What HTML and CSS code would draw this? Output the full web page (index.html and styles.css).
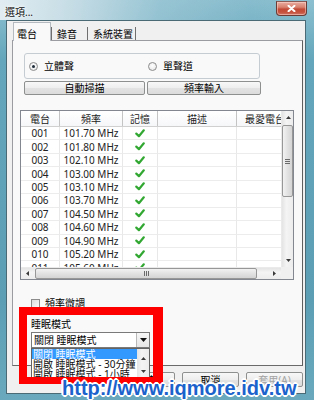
FILE: index.html
```html
<!DOCTYPE html>
<html>
<head>
<meta charset="utf-8">
<link rel="stylesheet" href="styles.css">
</head>
<body>
<div class="window">
  <div class="titlebar">
    <span class="title">選項...</span>
    <span class="close"><svg width="9" height="7" viewBox="0 0 9 7"><path d="M1.5 0.8 L7.5 6.2 M7.5 0.8 L1.5 6.2" stroke="#fff" stroke-width="2" stroke-linecap="round"/></svg></span>
  </div>
  <div class="client">
    <div class="tabs">
      <div class="tab sel">電台</div>
      <div class="tab t2">錄音</div>
      <div class="tab t3">系統裝置</div>
    </div>
    <div class="panel">
      <div class="group">
        <div class="radio r1"><span class="rb on"></span>立體聲</div>
        <div class="radio"><span class="rb"></span>單聲道</div>
      </div>
      <div class="btnrow">
        <div class="btn b1">自動掃描</div>
        <div class="btn b2">頻率輸入</div>
      </div>
      <div class="lv">
        <div class="lv-main">
          <div class="lv-head">
            <div class="cell c1">電台</div><div class="cell c2">頻率</div><div class="cell c3">記憶</div><div class="cell c4">描述</div><div class="cell c5">最愛電台</div>
          </div>
          <div class="row"><div class="cell c1">001</div><div class="cell c2">101.70 MHz</div><div class="cell c3"><svg class="ok" viewBox="0 0 10 9"><path d="M1.3 4.6 L3.9 7.2 L8.8 1.3"/></svg></div><div class="cell c4"></div><div class="cell c5"></div></div>
          <div class="row"><div class="cell c1">002</div><div class="cell c2">101.80 MHz</div><div class="cell c3"><svg class="ok" viewBox="0 0 10 9"><path d="M1.3 4.6 L3.9 7.2 L8.8 1.3"/></svg></div><div class="cell c4"></div><div class="cell c5"></div></div>
          <div class="row"><div class="cell c1">003</div><div class="cell c2">102.10 MHz</div><div class="cell c3"><svg class="ok" viewBox="0 0 10 9"><path d="M1.3 4.6 L3.9 7.2 L8.8 1.3"/></svg></div><div class="cell c4"></div><div class="cell c5"></div></div>
          <div class="row"><div class="cell c1">004</div><div class="cell c2">103.00 MHz</div><div class="cell c3"><svg class="ok" viewBox="0 0 10 9"><path d="M1.3 4.6 L3.9 7.2 L8.8 1.3"/></svg></div><div class="cell c4"></div><div class="cell c5"></div></div>
          <div class="row"><div class="cell c1">005</div><div class="cell c2">103.10 MHz</div><div class="cell c3"><svg class="ok" viewBox="0 0 10 9"><path d="M1.3 4.6 L3.9 7.2 L8.8 1.3"/></svg></div><div class="cell c4"></div><div class="cell c5"></div></div>
          <div class="row"><div class="cell c1">006</div><div class="cell c2">103.70 MHz</div><div class="cell c3"><svg class="ok" viewBox="0 0 10 9"><path d="M1.3 4.6 L3.9 7.2 L8.8 1.3"/></svg></div><div class="cell c4"></div><div class="cell c5"></div></div>
          <div class="row"><div class="cell c1">007</div><div class="cell c2">104.50 MHz</div><div class="cell c3"><svg class="ok" viewBox="0 0 10 9"><path d="M1.3 4.6 L3.9 7.2 L8.8 1.3"/></svg></div><div class="cell c4"></div><div class="cell c5"></div></div>
          <div class="row"><div class="cell c1">008</div><div class="cell c2">104.60 MHz</div><div class="cell c3"><svg class="ok" viewBox="0 0 10 9"><path d="M1.3 4.6 L3.9 7.2 L8.8 1.3"/></svg></div><div class="cell c4"></div><div class="cell c5"></div></div>
          <div class="row"><div class="cell c1">009</div><div class="cell c2">104.90 MHz</div><div class="cell c3"><svg class="ok" viewBox="0 0 10 9"><path d="M1.3 4.6 L3.9 7.2 L8.8 1.3"/></svg></div><div class="cell c4"></div><div class="cell c5"></div></div>
          <div class="row"><div class="cell c1">010</div><div class="cell c2">105.20 MHz</div><div class="cell c3"><svg class="ok" viewBox="0 0 10 9"><path d="M1.3 4.6 L3.9 7.2 L8.8 1.3"/></svg></div><div class="cell c4"></div><div class="cell c5"></div></div>
          <div class="row"><div class="cell c1">011</div><div class="cell c2">105.60 MHz</div><div class="cell c3"><svg class="ok" viewBox="0 0 10 9"><path d="M1.3 4.6 L3.9 7.2 L8.8 1.3"/></svg></div><div class="cell c4"></div><div class="cell c5"></div></div>
        </div>
        <div class="vscroll">
          <div class="sarrow"><svg width="5" height="3" viewBox="0 0 5 3"><path d="M0 3 L2.5 0 L5 3Z" fill="#3a3a3a"/></svg></div>
          <div class="vthumb"><span class="grip-h"></span><span class="grip-h"></span><span class="grip-h"></span></div>
          <div class="sfill"></div>
          <div class="sarrow"><svg width="5" height="3" viewBox="0 0 5 3"><path d="M0 0 L2.5 3 L5 0Z" fill="#3a3a3a"/></svg></div>
        </div>
        <div class="hscroll">
          <div class="sarrow"><svg width="3" height="5" viewBox="0 0 3 5"><path d="M3 0 L0 2.5 L3 5Z" fill="#3a3a3a"/></svg></div>
          <div class="hthumb"><span class="grip-v"></span><span class="grip-v"></span><span class="grip-v"></span></div>
          <div class="sfill"></div>
          <div class="sarrow"><svg width="3" height="5" viewBox="0 0 3 5"><path d="M0 0 L3 2.5 L0 5Z" fill="#3a3a3a"/></svg></div>
        </div>
        <div class="corner"></div>
      </div>
      <div class="check"><span class="cb"></span>頻率微調</div>
      <div class="sleep-label">睡眠模式</div>
      <div class="combo">
        <span class="combo-text">關閉 睡眠模式</span>
        <span class="combo-btn"><svg width="7" height="4" viewBox="0 0 7 4"><path d="M0 0 L3.5 4 L7 0Z" fill="#111"/></svg></span>
      </div>
    </div>
    <div class="footer">
      <div class="btn fb">確定</div>
      <div class="btn fb">取消</div>
      <div class="btn fb dis">套用(A)</div>
    </div>
  </div>

  <div class="dropdown">
    <div class="dd-items">
      <div class="dd-item hl">關閉 睡眠模式</div>
      <div class="dd-item">開啟 睡眠模式 - 30分鐘</div>
      <div class="dd-item">開啟 睡眠模式 - 1小時</div>
    </div>
    <div class="dd-scroll">
      <div class="dd-arrow"><svg width="5" height="3" viewBox="0 0 5 3"><path d="M0 3 L2.5 0 L5 3Z" fill="#3a3a3a"/></svg></div>
      <div class="dd-arrow"><svg width="5" height="3" viewBox="0 0 5 3"><path d="M0 0 L2.5 3 L5 0Z" fill="#3a3a3a"/></svg></div>
    </div>
  </div>
  <div class="redbox"></div>
  <div class="watermark">http://www.iqmore.idv.tw</div>
</div>
</body>
</html>
```

FILE: styles.css
```css
* { box-sizing: border-box; }

html, body {
  margin: 0;
  padding: 0;
}

body {
  font-family: "Noto Sans", "Noto Sans CJK TC", sans-serif;
  font-size: 10px;
  color: #000;
}

.window {
  position: relative;
  width: 314px;
  height: 400px;
  overflow: hidden;
  display: flex;
  flex-direction: column;
  padding: 0 8px 6px 6px;
  background: linear-gradient(to bottom, #8cc0d0 0, #64a6bb 60px, #5c9fb5 300px, #6aa9bd 100%);
}

/* ---------- title bar ---------- */
.titlebar {
  height: 20px;
  margin: 0 -8px 0 -6px;
  display: flex;
  align-items: flex-start;
  justify-content: space-between;
  background: linear-gradient(to right, rgba(228,238,243,0.97) 0, rgba(205,224,232,0.9) 70px, rgba(160,200,214,0.6) 160px, rgba(110,170,190,0.15) 250px, rgba(100,165,185,0) 300px);
}

.title {
  margin: 6px 0 0 5px;
  line-height: 12px;
  font-size: 10px;
  color: #111;
  text-shadow: 0 0 3px #fff, 0 0 5px #fff;
}

.close {
  margin: 1px 7px 0 0;
  width: 31px;
  height: 15px;
  border: 1px solid #6b3b36;
  border-top-color: #8a5a55;
  border-radius: 0 0 4px 4px;
  background: linear-gradient(to bottom, #e9aca0 0, #d9826f 40%, #c24a36 55%, #c65440 80%, #d2786a 100%);
  box-shadow: inset 0 0 0 1px rgba(255,220,210,0.5);
  display: flex;
  align-items: center;
  justify-content: center;
}

/* ---------- client ---------- */
.client {
  flex: 1;
  border: 1px solid #4a6a76;
  background: #f0f0f0;
  display: flex;
  flex-direction: column;
}

.tabs {
  display: flex;
  align-items: flex-end;
  height: 19px;
  padding-left: 6px;
}

.tab {
  height: 13px;
  display: flex;
  align-items: center;
  padding-left: 5px;
  line-height: 12px;
  border-left: 1px solid #6f6f6f;
  white-space: nowrap;
}

.tab.sel {
  position: relative;
  z-index: 1;
  width: 38px;
  height: 19px;
  margin-bottom: -1px;
  padding: 3px 0 0 3px;
  background: #f9f9f9;
  border: 1px solid #b5b9c0;
  border-bottom: none;
}

.tab.t2 { width: 36px; }
.tab.t3 { width: 49px; padding-left: 5px; border-right: 1px solid #6f6f6f; }

.panel {
  margin-left: 5px;
  width: 291px;
  height: 326px;
  background: #f9f9f9;
  border: 1px solid #9a9ca2;
  border-right-color: #5e5e5e;
  border-bottom-color: #6a6a6a;
}

/* radio group */
.group {
  margin: 12px 0 0 11px;
  width: 236px;
  height: 26px;
  border: 1px solid #c5ccd2;
  border-radius: 3px;
  display: flex;
  align-items: center;
  padding-left: 4px;
}

.radio {
  display: flex;
  align-items: center;
  gap: 6px;
  line-height: 12px;
}

.radio.r1 { width: 119px; }

.rb {
  width: 9px;
  height: 9px;
  border-radius: 50%;
  border: 1px solid #8c8c8c;
  background: radial-gradient(circle at 50% 40%, #ffffff 0, #e4e4e4 100%);
  display: flex;
  align-items: center;
  justify-content: center;
}

.rb.on::after {
  content: "";
  width: 3px;
  height: 3px;
  border-radius: 50%;
  background: #1c2a38;
}

/* buttons */
.btnrow {
  display: flex;
  gap: 2px;
  margin: 2px 0 0 11px;
}

.btn {
  height: 14px;
  border: 1px solid #8e8f8f;
  border-radius: 2px;
  background: linear-gradient(to bottom, #f8f8f8 0, #eeeeee 50%, #e3e3e3 51%, #dcdcdc 100%);
  display: flex;
  align-items: center;
  justify-content: center;
  line-height: 12px;
  white-space: nowrap;
}

.btn.b1 { width: 121px; }
.btn.b2 { width: 114px; }

/* list view */
.lv {
  margin: 15px 0 0 7px;
  width: 274px;
  height: 170px;
  border: 1px solid #828790;
  background: #fff;
  display: grid;
  grid-template-columns: 260px 12px;
  grid-template-rows: 156px 12px;
}

.lv-main {
  overflow: hidden;
}

.lv-head {
  display: flex;
  height: 16px;
  border-bottom: 1px solid #d0d0d0;
  background: linear-gradient(to bottom, #ffffff 0, #f6f7f9 100%);
}

.cell {
  flex: none;
  display: flex;
  align-items: center;
  justify-content: center;
  white-space: nowrap;
  overflow: hidden;
}

.lv-head .cell {
  border-right: 1px solid #c4c4c4;
  color: #222;
  line-height: 12px;
}

.row {
  display: flex;
  height: 13.45px;
  color: #222;
}

.row .cell {
  border-right: 1px solid #e8e8e8;
  border-bottom: 1px solid #ececec;
  line-height: 12px;
}

.c1 { width: 39px; }
.c2 { width: 63px; }
.c3 { width: 35px; }
.c4 { width: 79px; }
.c5 { width: 57px; }

.ok {
  width: 10px;
  height: 9px;
  fill: none;
  stroke: #32a832;
  stroke-width: 2.2;
  stroke-linecap: round;
  stroke-linejoin: round;
}

/* scrollbars */
.vscroll {
  display: flex;
  flex-direction: column;
  background: linear-gradient(to right, #e4e4e4 0, #f4f4f4 40%, #ececec 100%);
  border-left: 1px solid #eaeaea;
}

.hscroll {
  display: flex;
  background: linear-gradient(to bottom, #e4e4e4 0, #f4f4f4 40%, #ececec 100%);
  border-top: 1px solid #eaeaea;
}

.sarrow {
  flex: none;
  width: 12px;
  height: 13px;
  display: flex;
  align-items: center;
  justify-content: center;
}

.hscroll .sarrow {
  width: 13px;
  height: 11px;
}

.sfill { flex: 1; }

.vthumb {
  margin: 1px 0 0 0;
  height: 72px;
  border: 1px solid #979797;
  border-radius: 2px;
  background: linear-gradient(to right, #f2f2f2 0, #e2e2e2 50%, #d4d4d4 100%);
  display: flex;
  flex-direction: column;
  align-items: center;
  justify-content: center;
  gap: 1px;
}

.hthumb {
  margin-left: 1px;
  width: 222px;
  border: 1px solid #979797;
  border-radius: 2px;
  background: linear-gradient(to bottom, #f2f2f2 0, #e2e2e2 50%, #d4d4d4 100%);
  display: flex;
  align-items: center;
  justify-content: center;
  gap: 1px;
}

.grip-h {
  width: 5px;
  height: 1px;
  background: #6a6a6a;
}

.grip-v {
  width: 1px;
  height: 5px;
  background: #6a6a6a;
}

.corner {
  background: #f0f0f0;
}

/* checkbox + sleep mode */
.check {
  display: flex;
  align-items: center;
  gap: 5px;
  margin: 18px 0 0 18px;
  height: 10px;
  line-height: 10px;
}

.cb {
  width: 9px;
  height: 9px;
  border: 1px solid #8c8c8c;
  background: linear-gradient(135deg, #dcdcdc 0, #fafafa 100%);
}

.sleep-label {
  margin: 11px 0 0 18px;
  height: 10px;
  line-height: 10px;
}

.combo {
  margin: 3px 0 0 18px;
  width: 119px;
  height: 16px;
  border: 1px solid #7a7a7a;
  background: #fff;
  display: flex;
  align-items: center;
}

.combo-text {
  padding-left: 2px;
  line-height: 12px;
  white-space: nowrap;
}

.combo-btn {
  margin-left: auto;
  width: 13px;
  height: 100%;
  border-left: 1px solid #b9b9b9;
  background: linear-gradient(to bottom, #f7f7f7 0, #e6e6e6 100%);
  display: flex;
  align-items: center;
  justify-content: center;
}

/* footer buttons */
.footer {
  display: flex;
  justify-content: flex-end;
  gap: 7px;
  margin-top: 6px;
  padding-right: 2px;
}

.btn.fb {
  width: 57px;
  height: 15px;
}

.btn.dis {
  color: #a3a3a3;
}

/* dropdown list (open combobox) */
.dropdown {
  position: absolute;
  left: 31px;
  top: 348px;
  width: 119px;
  height: 32px;
  border: 1px solid #646464;
  background: #fff;
  display: flex;
}

.dd-items {
  flex: 1;
  overflow: hidden;
}

.dd-item {
  height: 10px;
  line-height: 10px;
  padding-left: 1px;
  white-space: nowrap;
  color: #111;
}

.dd-item.hl {
  background: #3399ff;
  color: #fff;
}

.dd-scroll {
  width: 12px;
  display: flex;
  flex-direction: column;
  justify-content: space-between;
  background: linear-gradient(to right, #e4e4e4 0, #f4f4f4 40%, #ececec 100%);
  padding: 3px 0 2px;
}

.dd-arrow {
  height: 12px;
  display: flex;
  align-items: center;
  justify-content: center;
}

/* annotation overlays */
.redbox {
  position: absolute;
  left: 19px;
  top: 307px;
  width: 144px;
  height: 77px;
  border-style: solid;
  border-color: #ff0000;
  border-width: 8px 10px 7px 8px;
}

.watermark {
  position: absolute;
  left: 62px;
  top: 378px;
  font-family: "Liberation Sans", Arial, sans-serif;
  font-weight: bold;
  font-size: 20px;
  line-height: 20px;
  color: #1b62cc;
  white-space: nowrap;
  text-shadow:
    1px 0 0 #fff, -1px 0 0 #fff, 0 1px 0 #fff, 0 -1px 0 #fff,
    1px 1px 0 #fff, -1px -1px 0 #fff, 1px -1px 0 #fff, -1px 1px 0 #fff,
    2px 0 0 #fff, -2px 0 0 #fff, 0 2px 0 #fff, 0 -2px 0 #fff;
}
```
